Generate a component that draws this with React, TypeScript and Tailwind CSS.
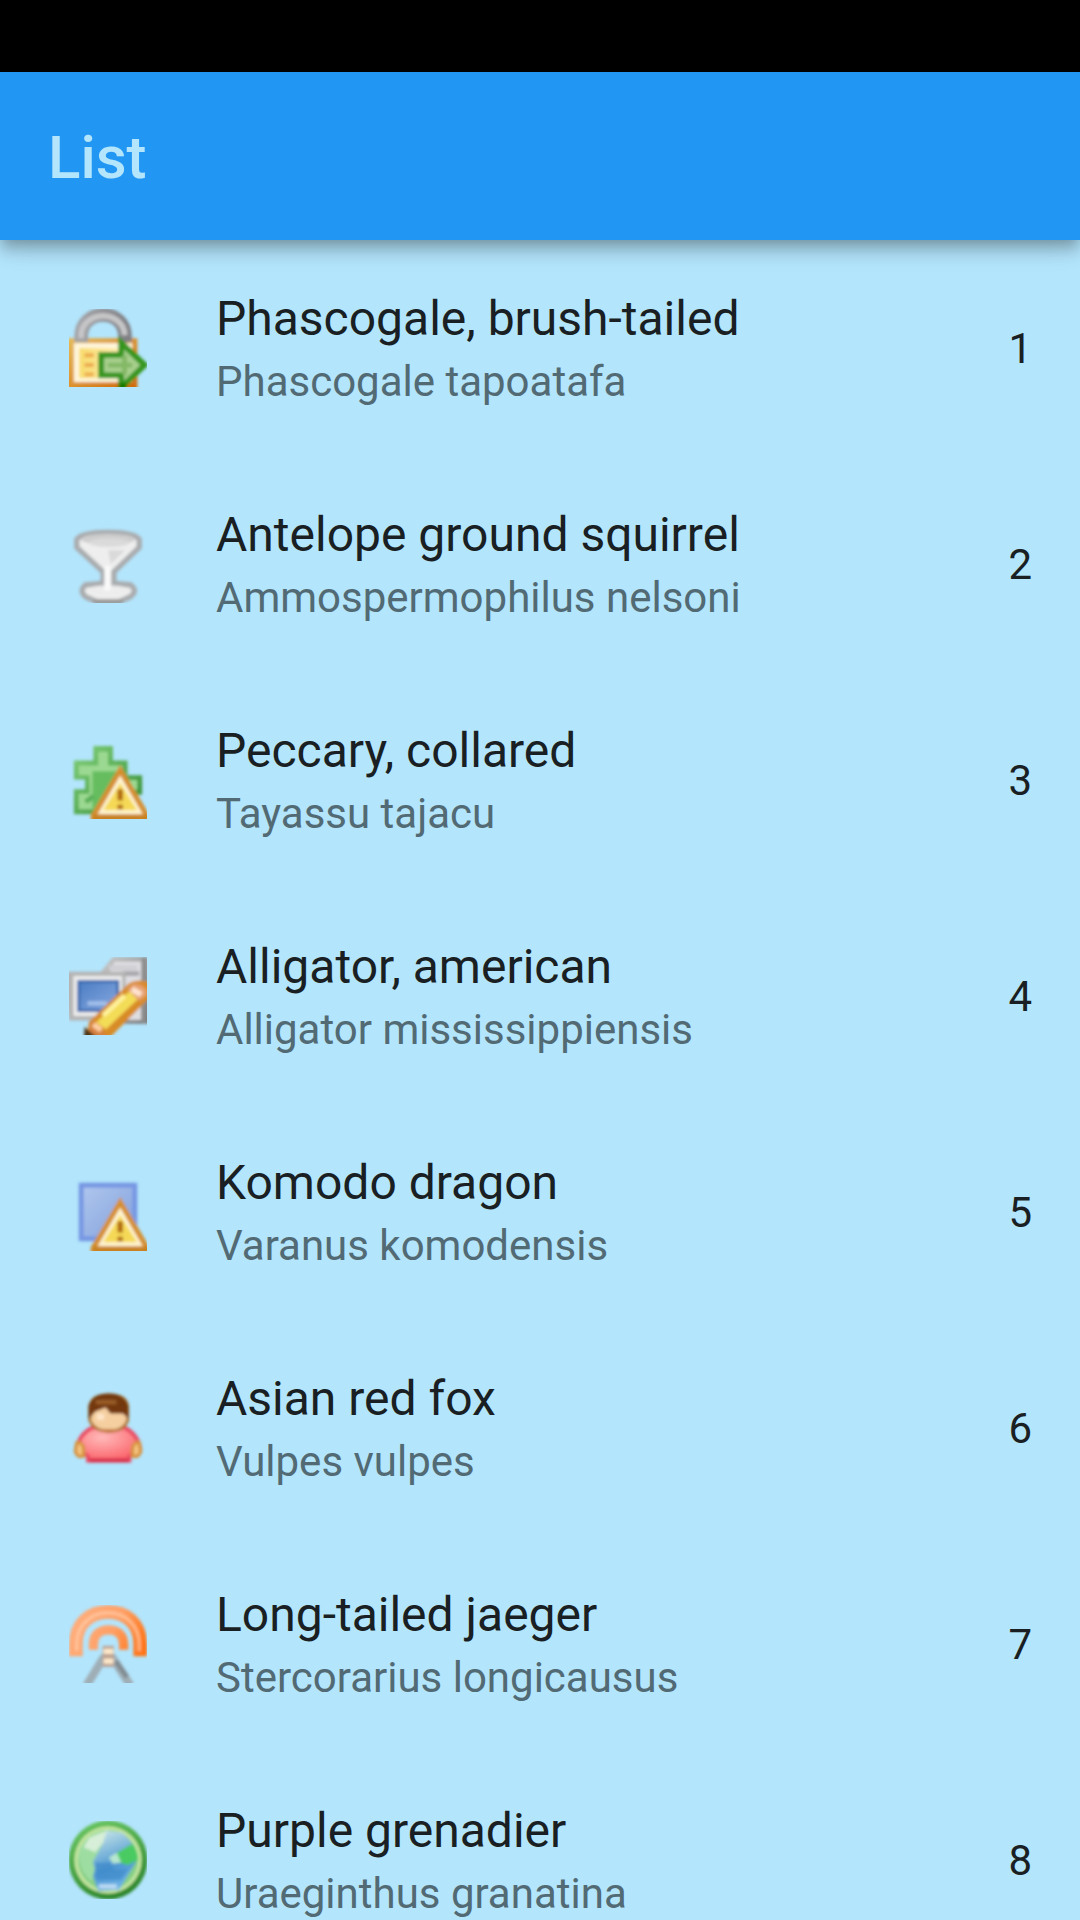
import type { ReactNode } from "react";

function Icon({ id, children }: { id: string; children: ReactNode }) {
  return (
    <svg viewBox="0 0 16 16" className="size-[78px] overflow-hidden" aria-hidden="true">
      <defs>
        <filter id={`${id}-soft`} x="-10%" y="-10%" width="120%" height="120%">
          <feGaussianBlur stdDeviation="0.36" />
        </filter>
      </defs>
      <g filter={`url(#${id}-soft)`}>{children}</g>
    </svg>
  );
}

function LockIcon() {
  return (
    <Icon id="lock">
      <defs>
        <linearGradient id="lock-frame" x1="0" y1="0" x2="1" y2="1">
          <stop offset="0" stopColor="#e6bd5c" />
          <stop offset="1" stopColor="#cf6400" />
        </linearGradient>
        <linearGradient id="lock-face" x1="0" y1="0" x2="1" y2="0">
          <stop offset="0" stopColor="#f8dc6c" />
          <stop offset="1" stopColor="#fff0c0" />
        </linearGradient>
        <linearGradient id="lock-shackle" x1="0" y1="0" x2="1" y2="0">
          <stop offset="0" stopColor="#a2a2a6" />
          <stop offset="1" stopColor="#808084" />
        </linearGradient>
      </defs>
      <rect x="-1" y="6" width="15" height="11" fill="url(#lock-frame)" />
      <rect x="1" y="7" width="12" height="8" fill="#fff6dc" />
      <rect x="2.1" y="8" width="10" height="6.2" fill="url(#lock-face)" />
      <path d="M3.2 9.5h1.9M3.2 11.5h1.9M3.2 13.4h1.9" stroke="#eca94a" strokeWidth="0.8" />
      <path d="M2.5 6.8V5.6C2.5 3 4.4 1.2 7 1.2s4.5 1.8 4.5 4.4v1.2" fill="none" stroke="url(#lock-shackle)" strokeWidth="2.8" />
      <path d="M2.5 6V5.4C2.5 3.1 4.6 1.4 7 1.4s4.4 1.7 4.4 4" fill="none" stroke="#c6c6c8" strokeWidth="1.2" />
      <path d="M6.6 9.4h4.1V6.9l4.8 4.6-4.8 4.6v-2.5H6.6z" fill="#a8d08e" stroke="#35951a" strokeWidth="1.2" />
      <path d="M8 11.5h5M11.4 9.5v4" stroke="#83b865" strokeWidth="1" />
      <path d="M10.1 15.2h1.8v1.5h-1.8z" fill="#187a00" />
    </Icon>
  );
}

function GlassIcon() {
  return (
    <Icon id="glass">
      <path d="M3.4 12.3 7 12V9.6L1.6 4.6V3Q2.5 1.5 8 1.5T14.4 3v1.6L9.2 9.6V12l3.4.3q1.6 1.2 0 2.4L10 15.9H6l-2.6-1.2q-1.4-1.2 0-2.4z" fill="#eeeeee" stroke="#a9acae" strokeWidth="1.1" />
      <ellipse cx="8" cy="2.9" rx="5.5" ry="1.1" fill="#cdcdcd" />
      <ellipse cx="8.2" cy="3.6" rx="4.2" ry="0.9" fill="#dadada" />
      <path d="M8 5.2h3.5L8.6 8z" fill="#d9d9d9" />
      <ellipse cx="8" cy="13.4" rx="4.7" ry="1" fill="#ededed" />
      <path d="M7.9 8.4v5" stroke="#fafafa" strokeWidth="1.3" />
      <path d="M5 15.7h6" stroke="#999999" strokeWidth="1" />
    </Icon>
  );
}

function WarningBadge() {
  return (
    <>
      <path d="M10.5 6 16 15.4v1.6H5v-1.6z" fill="#fff5d3" stroke="#d58f2d" strokeWidth="1.1" />
      <path d="M10.5 8.6 14 14.2H7z" fill="#f5d957" />
      <path d="M4.9 15h12v2h-12z" fill="#c98223" />
      <path d="M10.5 9.9v2.3M10.5 13.1v.9" stroke="#b0690c" strokeWidth="1.1" />
    </>
  );
}

function PuzzleIcon() {
  return (
    <Icon id="puzzle">
      <defs>
        <linearGradient id="puzzle-edge" x1="0" y1="0" x2="1" y2="1">
          <stop offset="0" stopColor="#80cf79" />
          <stop offset="1" stopColor="#2f8a2e" />
        </linearGradient>
      </defs>
      <path d="M1 4h4V1h4v3h3v3h3v4h-3v4H1V9.9h2.3v-2H1z" fill="url(#puzzle-edge)" />
      <path d="M2 5h4V2.2h2V5h3v3h3v2h-3v4H2v-3.2h2.2V7H2z" fill="#9bd992" />
      <path d="M4.8 6.2h5.8v5L6 14.2H4.8z" fill="#65bd5f" />
      <path d="M3.4 12.5 5 11.3" stroke="#59ae57" strokeWidth="1" />
      <WarningBadge />
    </Icon>
  );
}

function ComputerEditIcon() {
  return (
    <Icon id="computer">
      <defs>
        <linearGradient id="computer-case" x1="0" y1="0" x2="1" y2="1">
          <stop offset="0" stopColor="#c9c9c9" />
          <stop offset="1" stopColor="#717171" />
        </linearGradient>
        <linearGradient id="computer-screen" x1="0" y1="0" x2="1" y2="1">
          <stop offset="0" stopColor="#4c7dc3" />
          <stop offset="1" stopColor="#85a8e0" />
        </linearGradient>
      </defs>
      <path d="M6.5 3 9 0h8v13.7H10z" fill="url(#computer-case)" />
      <path d="M9.3.9h5.5v12H11V4H8z" fill="#dedee3" />
      <path d="M8.2 2.2h5.8" stroke="#cfcfd3" strokeWidth="1" />
      <path d="M11 3.4h3.4" stroke="#a6a6ab" strokeWidth="1" />
      <path d="M15.4 0v13.7" stroke="#8c8c8c" strokeWidth="0.9" />
      <path d="M-1 3h12.6v10H0z" fill="#b4b4b4" />
      <path d="M.9 3.9h10v8.2h-10z" fill="#ececec" />
      <path d="M2 5h8v6H2z" fill="url(#computer-screen)" stroke="#3868ad" strokeWidth="0.6" />
      <path d="M3.8 9.5h4" stroke="#a6c2ec" strokeWidth="0.8" />
      <path d="m3.6 16.8.5-3.5 8.2-7.9q1.800-1 4.200-.2v3.200l-8.400 8.400z" fill="#d88b28" />
      <path d="m5.6 13.4 7-6.6q1.800-.1 2 1.400l-7 6.600z" fill="#f3dc56" />
      <path d="m7 12 4.400-4.100" stroke="#fff29c" strokeWidth="1" />
      <path d="m11.900 6.600 1.300-1.100q2.600 0 2.900 2.200l-1.700 1.300z" fill="#e6a070" />
      <path d="m12.900 6.600 1.900 1.100" stroke="#ffe4cf" strokeWidth="1.200" />
      <path d="m4.400 13.100 3.400 3-1.600 1.200H3.800z" fill="#d5803f" />
      <path d="m5 13.800 1.600 1.200" stroke="#ffcfa2" strokeWidth="1.100" />
      <path d="M3.200 14.300 6.800 17.500H3z" fill="#4e3418" />
    </Icon>
  );
}

function ShapeWarningIcon() {
  return (
    <Icon id="shape">
      <defs>
        <linearGradient id="shape-fill" x1="0" y1="0" x2="1" y2="1">
          <stop offset="0" stopColor="#b0c8ee" />
          <stop offset="1" stopColor="#819edb" />
        </linearGradient>
      </defs>
      <rect x="2.5" y="2.5" width="11" height="11" fill="url(#shape-fill)" stroke="#7697e2" strokeWidth="1" />
      <WarningBadge />
    </Icon>
  );
}

function UserIcon() {
  return (
    <Icon id="user">
      <defs>
        <radialGradient id="user-shirt" cx="0.4" cy="0.3" r="0.7">
          <stop offset="0" stopColor="#ffb9b9" />
          <stop offset="1" stopColor="#fb666c" />
        </radialGradient>
      </defs>
      <path d="M4.800 7.900h6.600q2.800 1.500 3.200 4.400l-2.200 1.500v.9H3.900v-.9l-2.300-1.500Q2 9.400 4.800 7.900z" fill="url(#user-shirt)" stroke="#ea4c63" strokeWidth="0.8" />
      <path d="M1.600 11q1.300-.2 1.400 1.400v1.300q-1.300.5-1.700-.9zM14.400 11q-1.300-.2-1.400 1.400v1.300q1.300.5 1.700-.9z" fill="#f4c580" stroke="#d8923d" strokeWidth="0.7" />
      <path d="M4.300 4q0-2.800 3.900-2.800T12 4v2.600q-1 2.100-3.800 2.100T4.300 6.600z" fill="#f5cfa0" stroke="#b0752f" strokeWidth="0.6" />
      <path d="M4 6.200V3.400Q4.800.9 8.100.9T12.200 3.500V6L11 5H8.500L7.500 3.800 5.400 4.600z" fill="#73390a" />
      <path d="M5.500 2.700h4.200" stroke="#995d26" strokeWidth="0.9" />
      <path d="M5.700 5.700h1.500" stroke="#ffe6c9" strokeWidth="1.200" />
      <path d="M6.600 8.500h3.200" stroke="#c77a3c" strokeWidth="0.6" />
      <path d="M4.200 14.600h8" stroke="#d9304e" strokeWidth="0.800" />
    </Icon>
  );
}

function TransmitIcon() {
  return (
    <Icon id="transmit">
      <defs>
        <linearGradient id="transmit-wave" gradientUnits="userSpaceOnUse" x1="1" y1="2" x2="15" y2="9">
          <stop offset="0" stopColor="#ffae7c" />
          <stop offset="0.55" stopColor="#ffa066" />
          <stop offset="1" stopColor="#ff7414" />
        </linearGradient>
      </defs>
      <path d="M1.400 10.500V8C1.400 3.800 4.300 1.400 8 1.400s6.600 2.400 6.600 6.600v2.500" fill="none" stroke="url(#transmit-wave)" strokeWidth="2.800" />
      <path d="M1.600 9.500V8C1.600 4.200 4.400 1.600 8 1.600s6.400 2.600 6.400 6.400v1.500" fill="none" stroke="#ffd0ae" strokeWidth="0.7" opacity="0.65" />
      <path d="M5 9.200V8.100c0-2 1.300-3 3.100-3s3.100 1 3.100 3v1.100" fill="none" stroke="url(#transmit-wave)" strokeWidth="1.900" />
      <path d="M7.300 10.500 3.600 16.500M8.700 10.500l3.900 6" stroke="#9faeb6" strokeWidth="1.700" />
      <path d="m9.600 11.500 2.300 3.300" stroke="#808a90" strokeWidth="1" />
      <path d="M6.900 8.400h2.300v4.300H6.900z" fill="#b99f90" />
      <path d="M7.100 9.500h2M7.100 11.500h2" stroke="#ffe9cb" strokeWidth="1.100" />
    </Icon>
  );
}

function GlobeIcon() {
  return (
    <Icon id="globe">
      <defs>
        <linearGradient id="globe-rim" x1="0.300" y1="0" x2="0.700" y2="1">
          <stop offset="0" stopColor="#66c45f" />
          <stop offset="1" stopColor="#288227" />
        </linearGradient>
        <linearGradient id="globe-sea" x1="0.300" y1="0" x2="0.600" y2="1">
          <stop offset="0" stopColor="#c3e3e7" />
          <stop offset="0.600" stopColor="#4c96d2" />
          <stop offset="1" stopColor="#74b8ea" />
        </linearGradient>
      </defs>
      <circle cx="8" cy="8" r="8.100" fill="url(#globe-rim)" />
      <circle cx="8" cy="8" r="6.900" fill="#c5e7a2" />
      <circle cx="8" cy="8" r="6.200" fill="#86cf84" />
      <path d="M7.600 1.900 11 2.400l2.400 2.600.6 3-1.600 2.600-2.100 3.500-4.300.2-1-2.700L4.600 8 6 5.500z" fill="url(#globe-sea)" />
      <path d="M6.900 2Q3 2.900 2 6.800q.1 3.600 2.700 5.600l.6-2.600-.4-1.400L6.200 6 7 4.400z" fill="#9ddda2" />
      <path d="M7.800 1.900 4.200 3.400 3 5.400l2.400 1L7 4.400z" fill="#d7efd8" />
      <path d="m9.700 6.600 3.300-2q1.200 1.500 1.200 3.400L12 9.100 9 8z" fill="#48cb62" />
      <path d="m8.200 7.500 1.600-1 .9 2L9 8.700z" fill="#b6e6cf" />
      <path d="M5.400 8.500h3l1 1.400h2.700l-1.400 2.200H5.700z" fill="#3d88ca" opacity="0.650" />
      <path d="M6.100 13.400h3.700" stroke="#c1dff6" strokeWidth="0.8" />
    </Icon>
  );
}

const animals = [
  { name: "Phascogale, brush-tailed", latin: "Phascogale tapoatafa", icon: <LockIcon /> },
  { name: "Antelope ground squirrel", latin: "Ammospermophilus nelsoni", icon: <GlassIcon /> },
  { name: "Peccary, collared", latin: "Tayassu tajacu", icon: <PuzzleIcon /> },
  { name: "Alligator, american", latin: "Alligator mississippiensis", icon: <ComputerEditIcon /> },
  { name: "Komodo dragon", latin: "Varanus komodensis", icon: <ShapeWarningIcon /> },
  { name: "Asian red fox", latin: "Vulpes vulpes", icon: <UserIcon /> },
  { name: "Long-tailed jaeger", latin: "Stercorarius longicausus", icon: <TransmitIcon /> },
  { name: "Purple grenadier", latin: "Uraeginthus granatina", icon: <GlobeIcon /> },
];

export default function App() {
  return (
    <div className="flex h-screen flex-col overflow-hidden bg-[#b3e5fc] font-['Roboto',sans-serif] text-[#191f22]">
      <div className="h-18 shrink-0 bg-black" />
      <header className="z-10 flex h-42 shrink-0 items-center bg-[#2196f3] px-12 pt-1 shadow-[0_6px_12px_-3px_rgba(0,0,0,0.2),0_12px_15px_rgba(0,0,0,0.14),0_3px_30px_rgba(0,0,0,0.12)]">
        <h1 className="text-[60px] leading-18 font-medium text-[#b3e5fc]">List</h1>
      </header>
      <main className="min-h-0 flex-1 overflow-hidden">
        <ul>
          {animals.map((animal, index) => (
            <li key={animal.name} className="flex h-54 items-center px-12">
              <div className="flex w-30 shrink-0 justify-center">{animal.icon}</div>
              <div className="ml-12 min-w-0 flex-1">
                <h2 className="text-[48px] leading-[68px]">{animal.name}</h2>
                <p className="text-[42px] leading-[58px] text-[#526a74]">{animal.latin}</p>
              </div>
              <span className="pt-0.5 text-[42px] leading-[58px]">{index + 1}</span>
            </li>
          ))}
        </ul>
      </main>
    </div>
  );
}
